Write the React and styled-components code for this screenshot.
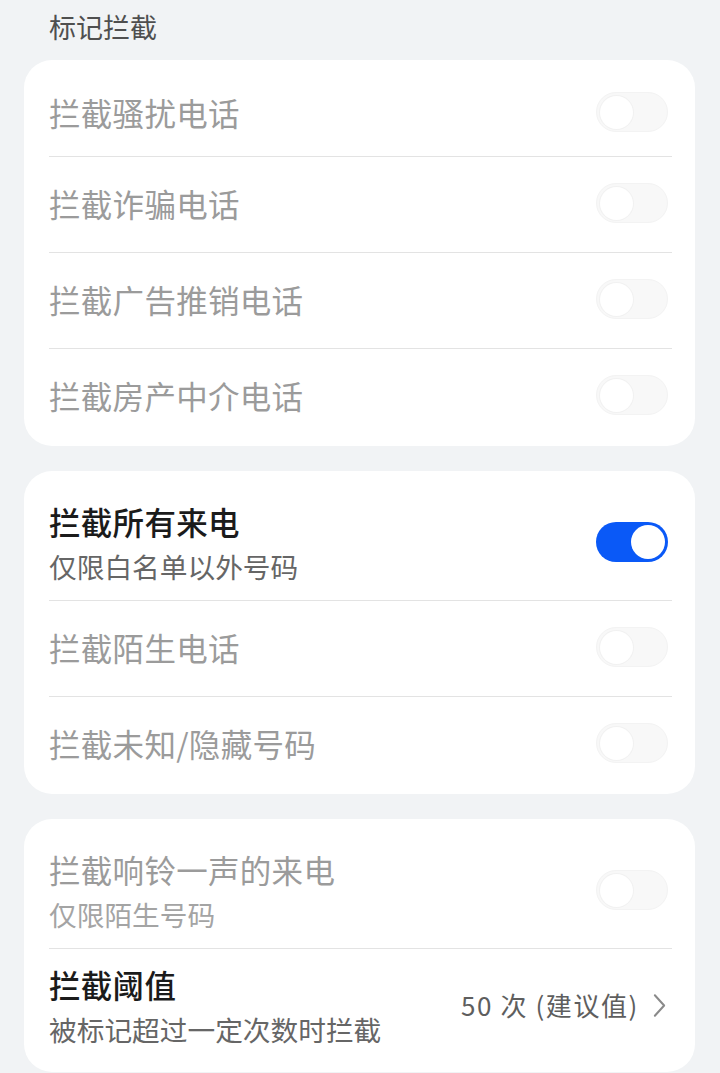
import styled, { createGlobalStyle } from "styled-components";

const GlobalStyle = createGlobalStyle`
	html, body {
		margin: 0;
		padding: 0;
		background: #f1f3f5;
	}
	body {
		font-family: "Noto Sans CJK SC", "Noto Sans", sans-serif;
		-webkit-font-smoothing: antialiased;
	}
`;

const sections = [
	[
		{ title: "拦截骚扰电话", disabled: true },
		{ title: "拦截诈骗电话", disabled: true },
		{ title: "拦截广告推销电话", disabled: true },
		{ title: "拦截房产中介电话", disabled: true },
	],
	[
		{ title: "拦截所有来电", sub: "仅限白名单以外号码", on: true },
		{ title: "拦截陌生电话", disabled: true },
		{ title: "拦截未知/隐藏号码", disabled: true },
	],
	[
		{ title: "拦截响铃一声的来电", sub: "仅限陌生号码", disabled: true },
		{ title: "拦截阈值", sub: "被标记超过一定次数时拦截", value: "50 次 (建议值)" },
	],
];

export default function App() {
	return (
		<Page>
			<GlobalStyle />
			<SectionTitle>标记拦截</SectionTitle>
			<Cards>
				{sections.map((items, i) => (
					<Card key={i}>
						{items.map((item) => (
							<Row key={item.title} $tall={!!item.sub}>
								<Texts>
									<Title $disabled={item.disabled}>{item.title}</Title>
									{item.sub && <Sub $disabled={item.disabled}>{item.sub}</Sub>}
								</Texts>
								{item.value ? (
									<Value>
										{item.value}
										<Chevron viewBox="0 0 14 26">
											<path d="M2 2 L12 13 L2 24" />
										</Chevron>
									</Value>
								) : (
									<Switch $on={item.on}>
										<Knob $on={item.on} />
									</Switch>
								)}
							</Row>
						))}
					</Card>
				))}
			</Cards>
		</Page>
	);
}

const Page = styled.div`
	width: 720px;
	min-height: 1073px;
	box-sizing: border-box;
	padding: 9px 25px 0 24px;
	overflow: hidden;
`;

const SectionTitle = styled.div`
	padding-left: 25px;
	font-size: 27px;
	line-height: 36px;
	color: #4f4f4f;
	margin-bottom: 15px;
`;

const Cards = styled.div`
	display: flex;
	flex-direction: column;
	gap: 25px;
`;

const Card = styled.div`
	background: #ffffff;
	border-radius: 28px;
	padding: 8px 0 2px;
`;

const Row = styled.div`
	display: flex;
	align-items: center;
	justify-content: space-between;
	margin: 0 23px 0 25px;
	box-sizing: border-box;
	min-height: ${(p) => (p.$tall ? "122px" : "96px")};
	padding: ${(p) => (p.$tall ? "6px 0 15px" : "0 0 4px")};
	border-top: 1px solid #e3e3e3;

	&:first-child {
		border-top: none;
		min-height: ${(p) => (p.$tall ? "121px" : "88px")};
		padding: ${(p) => (p.$tall ? "20px 0 15px" : "0")};
	}
`;

const Texts = styled.div`
	display: flex;
	flex-direction: column;
	gap: 4px;
`;

const Title = styled.div`
	font-size: 31.5px;
	line-height: 44px;
	letter-spacing: 0.3px;
	font-weight: ${(p) => (p.$disabled ? 400 : 500)};
	color: ${(p) => (p.$disabled ? "#9b9b9b" : "#1b1b1b")};
`;

const Sub = styled.div`
	font-size: 27.7px;
	line-height: 38px;
	color: ${(p) => (p.$disabled ? "#a4a4a4" : "#666666")};
`;

const Switch = styled.div`
	flex: none;
	width: 72px;
	height: 40px;
	margin-right: 4px;
	border-radius: 20px;
	box-sizing: border-box;
	padding: 3px;
	display: flex;
	justify-content: ${(p) => (p.$on ? "flex-end" : "flex-start")};
	background: ${(p) => (p.$on ? "#0a59f7" : "#f8f8f8")};
	border: ${(p) => (p.$on ? "none" : "1px solid #f3f3f3")};
`;

const Knob = styled.div`
	width: ${(p) => (p.$on ? "34px" : "33px")};
	height: ${(p) => (p.$on ? "34px" : "33px")};
	border-radius: 50%;
	background: #ffffff;
	box-shadow: ${(p) => (p.$on ? "none" : "0 0 0 1px #f1f1f1")};
`;

const Value = styled.div`
	display: flex;
	align-items: center;
	gap: 14px;
	margin-right: 6px;
	font-size: 26px;
	line-height: 36px;
	letter-spacing: 1.6px;
	color: #5e5e5e;
	white-space: nowrap;
`;

const Chevron = styled.svg`
	width: 13px;
	height: 25px;
	fill: none;
	stroke: #8a8a8a;
	stroke-width: 2.2;
	stroke-linecap: round;
	stroke-linejoin: round;
`;
